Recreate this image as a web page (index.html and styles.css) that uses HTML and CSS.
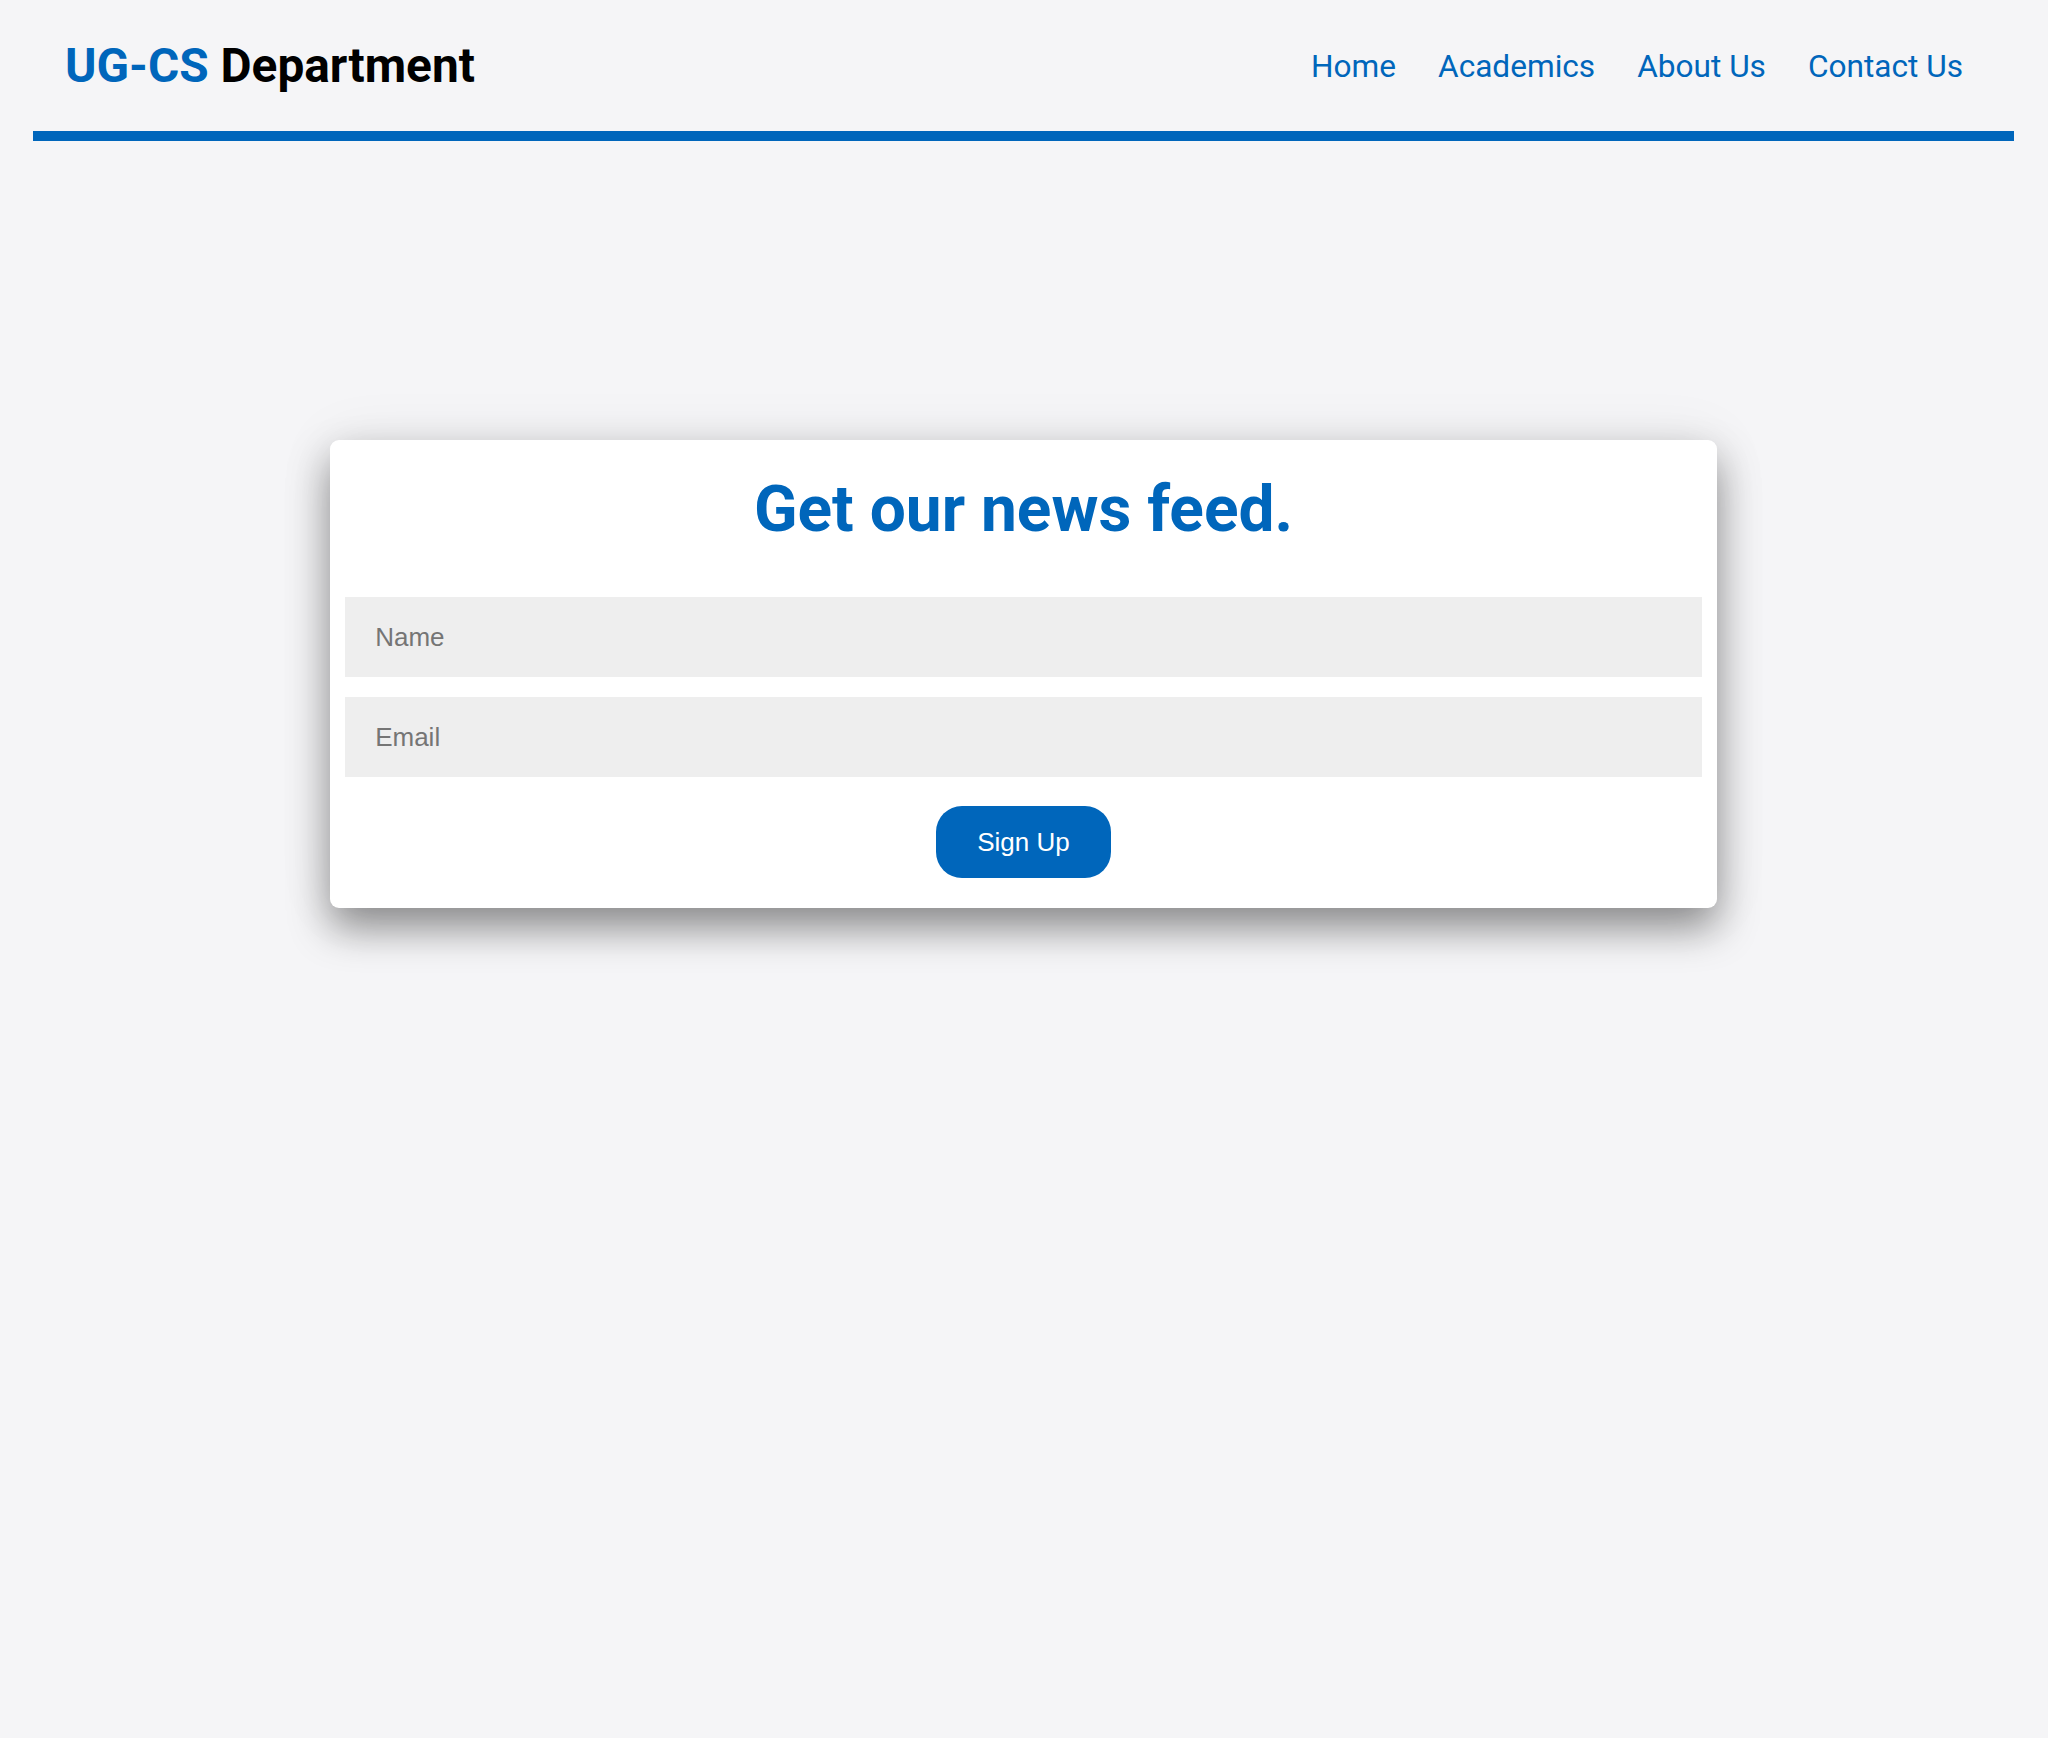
FILE: index.html
```html
<!DOCTYPE html>
<html lang="en">
<head>
<meta charset="utf-8">
<title>UG-CS Department</title>
<link rel="stylesheet" href="styles.css">
</head>
<body>
<div class="page">
  <header class="site-header">
    <h1 class="logo"><span class="logo-accent">UG-CS</span> Department</h1>
    <nav class="nav">
      <a href="#" class="nav-link">Home</a>
      <a href="#" class="nav-link">Academics</a>
      <a href="#" class="nav-link">About Us</a>
      <a href="#" class="nav-link">Contact Us</a>
    </nav>
  </header>
  <main class="main">
    <form class="card">
      <h2 class="card-title">Get our news feed.</h2>
      <input class="field" type="text" placeholder="Name">
      <input class="field" type="email" placeholder="Email">
      <button class="btn" type="button">Sign Up</button>
    </form>
  </main>
</div>
</body>
</html>
```

FILE: styles.css
```css
html, body {
  margin: 0;
  padding: 0;
  background: #f5f5f7;
}

body {
  font-family: Roboto, "Liberation Sans", Arial, sans-serif;
  min-height: 100vh;
}

.page {
  margin: 0 34px 0 33px;
  min-height: 100vh;
}

.site-header {
  height: 129px;
  display: flex;
  align-items: center;
  justify-content: space-between;
  padding: 2px 51px 0 32px;
  border-bottom: 10px solid #0066bb;
}

.logo {
  margin: 0;
  font-size: 47.8px;
  font-weight: 700;
  color: #000;
  line-height: 1;
}

.logo-accent {
  color: #0066bb;
}

.nav {
  display: flex;
  gap: 42px;
}

.nav-link {
  font-size: 31.6px;
  color: #0066bb;
  text-decoration: none;
  line-height: 1;
}

.main {
  display: flex;
  justify-content: center;
  padding: 299px 0 200px;
}

.card {
  width: 70%;
  box-sizing: border-box;
  background: #fff;
  border-radius: 9px;
  padding: 15px 15px 30px;
  display: flex;
  flex-direction: column;
  align-items: stretch;
  box-shadow: 0 20px 40px rgba(0, 0, 0, 0.42), 0 0 60px rgba(0, 0, 0, 0.07);
}

.card-title {
  margin: 17px 0 50px;
  text-align: center;
  font-size: 64px;
  font-weight: 700;
  color: #0066bb;
  line-height: 75px;
}

.field {
  height: 80px;
  border: none;
  outline: none;
  background: #eeeeee;
  padding: 0 30px;
  font-family: "Liberation Sans", Arial, sans-serif;
  font-size: 26px;
  color: #333;
  margin: 0 0 20px;
}

.field::placeholder {
  color: #757575;
}

.btn {
  align-self: center;
  margin-top: 9px;
  height: 72px;
  padding: 0 41px;
  border: none;
  border-radius: 26px;
  background: #0066bb;
  color: #fff;
  font-family: "Liberation Sans", Arial, sans-serif;
  font-size: 26px;
}
```
